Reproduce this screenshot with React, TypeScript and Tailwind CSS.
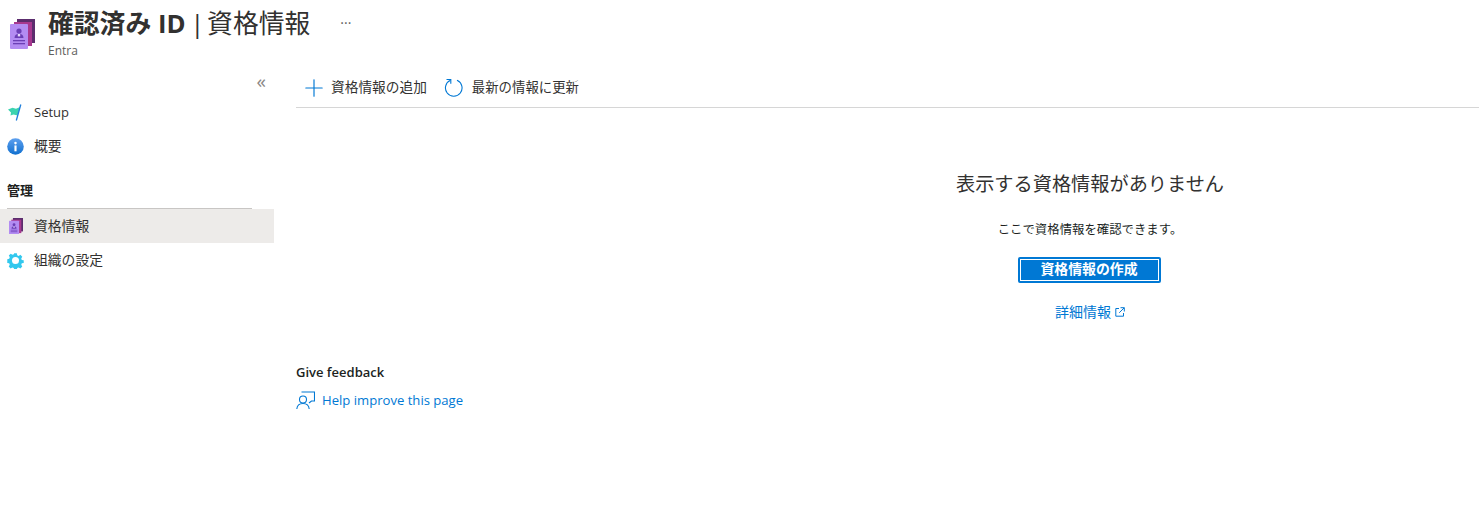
import { Plus } from 'lucide-react';

const FONT = 'font-["Open_Sans","Noto_Sans_CJK_JP",sans-serif]';

function CredentialIcon({ size }: { size: number }) {
  return (
    <svg width={size} height={size * 1.2} viewBox="0 0 25 30">
      <rect x="7" y="0" width="18" height="24" fill="#5c2d6e" />
      <rect x="4" y="3" width="18" height="24" fill="#a8388f" />
      <rect x="0" y="5" width="18" height="25" rx="1" fill="#b38cf2" />
      <circle cx="9" cy="12" r="2.6" fill="#6b3fb5" />
      <path d="M4.5 19c0-3 2-4.2 4.5-4.2s4.500 1.200 4.500 4.200z" fill="#6b3fb5" />
      <rect x="7.800" y="15" width="2.400" height="2.400" fill="#e4d8fb" />
      <rect x="3" y="21" width="12" height="1.300" fill="#6b3fb5" />
      <rect x="3" y="24" width="12" height="1.300" fill="#6b3fb5" />
    </svg>
  );
}

function FlagIcon() {
  return (
    <svg width="16" height="17" viewBox="0 0 16 17">
      <path d="M1 5.500 5.500 3.800 9 4.800 13 3 10.500 11.500 6.500 10.500 3.500 11.500 4 8.500z" fill="#3cd3b0" />
      <path d="M13.800.5 9.300 16.500" stroke="#1f7fdc" strokeWidth="1.300" fill="none" />
    </svg>
  );
}

function InfoIcon() {
  return (
    <svg width="17" height="17" viewBox="0 0 16 16">
      <defs>
        <linearGradient id="info" x1="0" y1="0" x2="0" y2="1">
          <stop offset="0" stopColor="#5ea0ef" />
          <stop offset="1" stopColor="#0f6fcf" />
        </linearGradient>
      </defs>
      <circle cx="8" cy="8" r="7.800" fill="url(#info)" />
      <rect x="7" y="7" width="2" height="5.500" fill="#fff" />
      <circle cx="8" cy="4.800" r="1.200" fill="#fff" />
    </svg>
  );
}

function GearIcon() {
  return (
    <svg width="17" height="17" viewBox="0 0 16 16">
      <path
        d="M6.600.5h2.800l.4 2 1.500.7 1.800-1.100 2 2-1.100 1.800.6 1.500 2 .4v2.800l-2 .4-.6 1.500 1.100 1.800-2 2-1.800-1.100-1.500.6-.4 2H6.600l-.4-2-1.500-.6-1.800 1.100-2-2 1.100-1.800-.6-1.500-2-.4V6.600l2-.4.6-1.500L1 2.900l2-2 1.800 1.100 1.500-.6z"
        fill="#32c8ee"
        transform="translate(.8 .8) scale(.9)"
      />
      <circle cx="8" cy="8" r="3.300" fill="#fff" />
    </svg>
  );
}

function RefreshIcon() {
  return (
    <svg width="19" height="19" viewBox="0 0 19 19" fill="none" stroke="#0078d4" strokeWidth="1.100" className="ml-[17px]">
      <path d="M6.500 2.300A8.300 8.300 0 1 0 13 2.300" />
      <path d="M2.500 1.500h4.300v4.300" />
    </svg>
  );
}

function ExternalIcon() {
  return (
    <svg width="10" height="10" viewBox="0 0 10 10" fill="none" stroke="#0078d4" strokeWidth="1">
      <path d="M4 1.500H.8v7.700h7.700V6" />
      <path d="M5.500.7h3.800v3.800M9.200.8 4.200 5.800" />
    </svg>
  );
}

function FeedbackIcon() {
  return (
    <svg width="19" height="19" viewBox="0 0 19 19" fill="none" stroke="#0078d4" strokeWidth="1.100">
      <circle cx="7" cy="8.500" r="3.500" />
      <path d="M.8 18c.3-3.500 2.800-5.500 6.200-5.500s5.900 2 6.200 5.500" />
      <path d="M5.500 1h13v9h-3l-2.500 2" />
    </svg>
  );
}

function NavItem({ icon, label, active, cjk }: { icon: React.ReactNode; label: string; active?: boolean; cjk?: boolean }) {
  return (
    <div className={`flex h-[34px] items-center ${active ? 'bg-[#edebe9]' : ''}`}>
      <div className="flex w-[34px] items-center pl-[7px]">{icon}</div>
      <span className={`text-[#323130] ${cjk ? 'pt-[1px] text-[13.8px]' : 'pt-[2px] text-[13px]'}`}>{label}</span>
    </div>
  );
}

export default function App() {
  return (
    <div className={`min-h-[526px] bg-white ${FONT}`}>
      {/* Header */}
      <div className="flex h-[70px]">
        <div className="pl-[10px] pt-[19px]">
          <CredentialIcon size={25} />
        </div>
        <div className="pl-[13px]">
          <div className="flex h-[47px] items-center pb-[2px]">
            <h1 className="text-[25.8px] leading-[32px] text-[#323130]">
              <span className="font-semibold">確認済み <span className="font-bold">ID</span></span>
              <span className="tracking-[-2px]"> | </span>
              <span>資格情報</span>
            </h1>
            <span className="ml-[30px] text-[14px] leading-none text-[#605e5c]">···</span>
          </div>
          <div className="pt-[1px] text-[12px] leading-[6px] text-[#605e5c]">Entra</div>
        </div>
      </div>

      <div className="flex">
        {/* Sidebar */}
        <aside className="w-[274px] shrink-0">
          <div className="flex h-[25px] items-center justify-end pr-[8px] pb-[3px] text-[19px] text-[#8a8886]">«</div>
          <NavItem icon={<FlagIcon />} label="Setup" />
          <NavItem icon={<InfoIcon />} label="概要" cjk />
          <div className="mr-[22px] ml-[7px] flex h-[46px] items-center border-b border-[#c8c6c4] pt-[11px] text-[13px] font-semibold text-[#201f1e]">
            管理
          </div>
          <NavItem icon={<span className="pl-[2px]"><CredentialIcon size={14} /></span>} label="資格情報" active cjk />
          <NavItem icon={<GearIcon />} label="組織の設定" cjk />
        </aside>

        {/* Main */}
        <main className="ml-[22px] flex-1">
          <div className="flex h-[38px] items-center border-b border-[#d6d6d6] pb-[2px] text-[13.7px] text-[#323130]">
            <Plus size={28} strokeWidth={1} className="ml-[4px] text-[#0078d4]" />
            <span className="ml-[3px]">資格情報の追加</span>
            <RefreshIcon />
            <span className="ml-[9px] text-[13.4px]">最新の情報に更新</span>
          </div>

          <div className="flex flex-col items-center pt-[61px] pl-[405px]">
            <h2 className="text-[19.2px] leading-[30px] text-[#323130]">表示する資格情報がありません</h2>
            <p className="mt-[21px] text-[12.4px] leading-[20px] text-[#201f1e]">ここで資格情報を確認できます。</p>
            <button className="mt-[17px] -ml-[2px] h-[26px] w-[143px] rounded-[2px] border-2 border-[#0078d4] bg-[#0078d4] pb-[2px] text-[13.900px] leading-[20px] font-semibold text-white outline outline-1 -outline-offset-3 outline-white">
              資格情報の作成
            </button>
            <a className="mt-[19px] flex items-center gap-[4px] text-[14px] leading-[20px] text-[#0078d4]">
              詳細情報
              <ExternalIcon />
            </a>
          </div>

          <div className="mt-[40px]">
            <div className="text-[13px] leading-[20px] font-semibold text-[#201f1e]">Give feedback</div>
            <a className="mt-[8px] flex items-center gap-[7px] text-[13.1px] leading-[20px] text-[#0078d4]">
              <FeedbackIcon />
              Help improve this page
            </a>
          </div>
        </main>
      </div>
    </div>
  );
}
